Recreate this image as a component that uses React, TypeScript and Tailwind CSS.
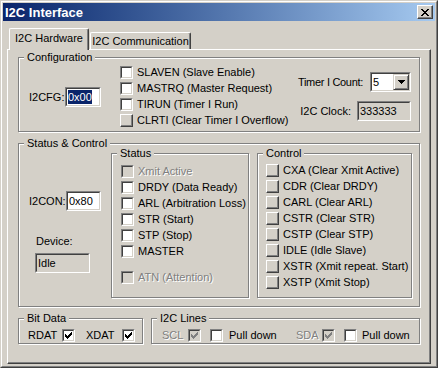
import React from "react";

const CheckSvg = ({ color }: { color: string }) => (
  <svg width="7" height="7" viewBox="0 0 7 7" shapeRendering="crispEdges" fill={color}>
    <path d="M6 0h1v1H6z M5 1h2v1H5z M0 2h1v1H0z M4 2h3v1H4z M0 3h2v1H0z M3 3h3v1H3z M0 4h5v1H0z M1 5h3v1H1z M2 6h1v1H2z" />
  </svg>
);

const CloseSvg = () => (
  <svg width="8" height="7" viewBox="0 0 8 7" shapeRendering="crispEdges" fill="#000">
    <path d="M0 0h2v1H0z M6 0h2v1H6z M1 1h2v1H1z M5 1h2v1H5z M2 2h4v1H2z M3 3h2v1H3z M2 4h4v1H2z M1 5h2v1H1z M5 5h2v1H5z M0 6h2v1H0z M6 6h2v1H6z" />
  </svg>
);

const ArrowSvg = () => (
  <svg width="7" height="4" viewBox="0 0 7 4" shapeRendering="crispEdges" fill="#000">
    <path d="M0 0h7v1H0z M1 1h5v1H1z M2 2h3v1H2z M3 3h1v1H3z" />
  </svg>
);

function Box({ checked, disabled, raised }: { checked?: boolean; disabled?: boolean; raised?: boolean }) {
  if (raised) {
    return (
      <div className="w-[13px] h-[13px] shrink-0 border border-t-white border-l-white border-r-[#404040] border-b-[#404040] bg-[#d4d0c8] shadow-[inset_-1px_-1px_0_#808080]" />
    );
  }
  return (
    <div className="w-[13px] h-[13px] shrink-0 border border-t-[#808080] border-l-[#808080] border-r-white border-b-white">
      <div
        className={`w-full h-full border border-t-[#404040] border-l-[#404040] border-r-[#d4d0c8] border-b-[#d4d0c8] flex items-center justify-center ${
          disabled ? "bg-[#d4d0c8]" : "bg-white"
        }`}
      >
        {checked && <CheckSvg color={disabled ? "#808080" : "#000"} />}
      </div>
    </div>
  );
}

function Row({ label, checked, disabled, raised }: { label: string; checked?: boolean; disabled?: boolean; raised?: boolean }) {
  return (
    <div className="h-[16px] flex items-start">
      <Box checked={checked} disabled={disabled} raised={raised} />
      <span
        className={`ml-[4px] leading-[13px] whitespace-nowrap ${
          disabled ? "text-[#808080] [text-shadow:1px_1px_0_#fff]" : ""
        }`}
      >
        {label}
      </span>
    </div>
  );
}

function Edit({ className, gray, children }: { className: string; gray?: boolean; children: React.ReactNode }) {
  return (
    <div className={`shrink-0 border border-t-[#808080] border-l-[#808080] border-r-white border-b-white ${className}`}>
      <div
        className={`w-full h-full border border-t-[#404040] border-l-[#404040] border-r-[#d4d0c8] border-b-[#d4d0c8] flex items-center pl-px ${
          gray ? "bg-[#d4d0c8]" : "bg-white"
        }`}
      >
        {children}
      </div>
    </div>
  );
}

function Group({ title, className, children }: { title: string; className: string; children?: React.ReactNode }) {
  return (
    <div className={`relative shrink-0 border border-[#808080] shadow-[inset_1px_1px_0_#fff,1px_1px_0_#fff] ${className}`}>
      <span className="absolute -top-[7px] left-[5px] px-[3px] bg-[#d4d0c8] leading-[13px] whitespace-nowrap">{title}</span>
      {children}
    </div>
  );
}

export default function App() {
  return (
    <div className="w-[438px] h-[368px] bg-[#d4d0c8] border border-t-[#d4d0c8] border-l-[#d4d0c8] border-r-[#404040] border-b-[#404040] font-['Liberation_Sans',Arial,sans-serif] text-[11px] leading-[13px] text-black overflow-hidden select-none">
      <div className="h-full border border-t-white border-l-white border-r-[#808080] border-b-[#808080] p-px flex flex-col">
        {/* Title bar */}
        <div className="h-[18px] shrink-0 flex items-center bg-gradient-to-r from-[#0a246a] to-[#a6caf0] pl-[2px] pr-[2px]">
          <span className="text-white font-bold text-[13px] leading-[15px]">I2C Interface</span>
          <div className="ml-auto w-[16px] h-[14px] border border-t-white border-l-white border-r-[#404040] border-b-[#404040] bg-[#d4d0c8] shadow-[inset_-1px_-1px_0_#808080] flex items-center justify-center">
            <CloseSvg />
          </div>
        </div>

        {/* Tabs */}
        <div className="mt-[7px] h-[21px] shrink-0 flex items-end pl-[6px] relative z-10">
          <div className="w-[80px] h-[22px] -mb-px bg-[#d4d0c8] border-t border-l border-r border-t-white border-l-white border-r-[#404040] shadow-[inset_-1px_0_0_#808080] rounded-tl-[2px] rounded-tr-[2px] flex justify-center pt-[3px]">
            I2C Hardware
          </div>
          <div className="ml-px w-[101px] h-[17px] bg-[#d4d0c8] border-t border-l border-r border-t-white border-l-white border-r-[#404040] shadow-[inset_-1px_0_0_#808080] rounded-tl-[2px] rounded-tr-[2px] flex items-center justify-center">
            I2C Communication
          </div>
        </div>

        {/* Panel */}
        <div className="mx-[4px] h-[315px] shrink-0 border border-t-white border-l-white border-r-[#404040] border-b-[#404040] shadow-[inset_-1px_-1px_0_#808080] pl-[10px] pt-[7px] flex flex-col">
          {/* Configuration */}
          <Group title="Configuration" className="w-[402px] h-[75px]">
            <div className="flex h-full">
              <div className="flex items-center h-[20px] mt-[29px] ml-[10px]">
                <span className="w-[36px]">I2CFG:</span>
                <Edit className="w-[36px] h-[20px]">
                  <span className="bg-[#0a246a] text-white leading-[14px]">0x00</span>
                </Edit>
              </div>
              <div className="ml-[19px] mt-[8px] flex flex-col">
                <Row label="SLAVEN (Slave Enable)" />
                <Row label="MASTRQ (Master Request)" />
                <Row label="TIRUN (Timer I Run)" />
                <Row label="CLRTI (Clear Timer I Overflow)" raised />
              </div>
              <div className="ml-auto mr-[8px] mt-[14px] flex flex-col items-end gap-[9px]">
                <div className="flex items-center h-[20px]">
                  <span className="tracking-[-0.3px]">Timer I Count:</span>
                  <div className="ml-[7px] w-[41px] h-[20px] border border-t-[#808080] border-l-[#808080] border-r-white border-b-white">
                    <div className="w-full h-full border border-t-[#404040] border-l-[#404040] border-r-[#d4d0c8] border-b-[#d4d0c8] bg-white flex items-stretch">
                      <span className="pl-px flex-1 flex items-center">5</span>
                      <div className="w-[16px] border border-t-[#d4d0c8] border-l-[#d4d0c8] border-r-[#404040] border-b-[#404040] bg-[#d4d0c8] shadow-[inset_1px_1px_0_#fff,inset_-1px_-1px_0_#808080] flex items-center justify-center">
                        <ArrowSvg />
                      </div>
                    </div>
                  </div>
                </div>
                <div className="flex items-center h-[20px]">
                  <span>I2C Clock:</span>
                  <Edit className="ml-[6px] w-[54px] h-[20px]" gray>
                    333333
                  </Edit>
                </div>
              </div>
            </div>
          </Group>

          {/* Status & Control */}
          <Group title="Status & Control" className="mt-[11px] w-[402px] h-[164px]">
            <div className="flex h-full">
              <div className="w-[92px] flex flex-col shrink-0">
                <div className="flex items-center h-[20px] mt-[47px] ml-[10px]">
                  <span className="w-[37px]">I2CON:</span>
                  <Edit className="w-[35px] h-[20px]">0x80</Edit>
                </div>
                <span className="mt-[24px] ml-[17px]">Device:</span>
                <Edit className="mt-[5px] ml-[16px] w-[55px] h-[20px]" gray>
                  Idle
                </Edit>
              </div>
              <Group title="Status" className="mt-[9px] w-[138px] h-[145px]">
                <div className="pt-[11px] pl-[9px] flex flex-col">
                  <Row label="Xmit Active" disabled />
                  <Row label="DRDY (Data Ready)" />
                  <Row label="ARL (Arbitration Loss)" />
                  <Row label="STR (Start)" />
                  <Row label="STP (Stop)" />
                  <Row label="MASTER" />
                  <div className="mt-[10px]">
                    <Row label="ATN (Attention)" disabled />
                  </div>
                </div>
              </Group>
              <Group title="Control" className="ml-[8px] mt-[9px] w-[155px] h-[145px]">
                <div className="pt-[10px] pl-[8px] flex flex-col">
                  <Row label="CXA (Clear Xmit Active)" raised />
                  <Row label="CDR (Clear DRDY)" raised />
                  <Row label="CARL (Clear ARL)" raised />
                  <Row label="CSTR (Clear STR)" raised />
                  <Row label="CSTP (Clear STP)" raised />
                  <Row label="IDLE (Idle Slave)" raised />
                  <Row label="XSTR (Xmit repeat. Start)" raised />
                  <Row label="XSTP (Xmit Stop)" raised />
                </div>
              </Group>
            </div>
          </Group>

          {/* Bottom row */}
          <div className="mt-[11px] flex">
            <Group title="Bit Data" className="w-[125px] h-[26px]">
              <div className="pt-[10px] pl-[9px] flex items-start">
                <span className="w-[34px] leading-[13px]">RDAT</span>
                <Box checked />
                <span className="ml-[11px] w-[36px] leading-[13px]">XDAT</span>
                <Box checked />
              </div>
            </Group>
            <Group title="I2C Lines" className="ml-[8px] w-[269px] h-[26px]">
              <div className="pt-[10px] pl-[10px] flex items-start">
                <span className="w-[26px] leading-[13px] text-[#808080] [text-shadow:1px_1px_0_#fff]">SCL</span>
                <Box checked disabled />
                <div className="ml-[9px]">
                  <Box />
                </div>
                <span className="ml-[6px] w-[67px] leading-[13px]">Pull down</span>
                <span className="w-[26px] leading-[13px] text-[#808080] [text-shadow:1px_1px_0_#fff]">SDA</span>
                <Box checked disabled />
                <div className="ml-[9px]">
                  <Box />
                </div>
                <span className="ml-[5px] leading-[13px]">Pull down</span>
              </div>
            </Group>
          </div>
        </div>
      </div>
    </div>
  );
}
